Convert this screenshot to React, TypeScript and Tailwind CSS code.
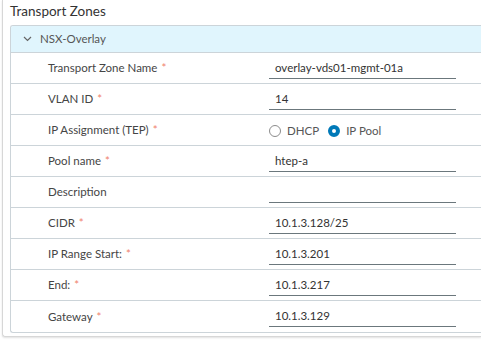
import React from "react";

type Field = {
  label: string;
  required?: boolean;
  value?: string;
  radio?: boolean;
};

const fields: Field[] = [
  { label: "Transport Zone Name", required: true, value: "overlay-vds01-mgmt-01a" },
  { label: "VLAN ID", required: true, value: "14" },
  { label: "IP Assignment (TEP)", required: true, radio: true },
  { label: "Pool name", required: true, value: "htep-a" },
  { label: "Description", value: "" },
  { label: "CIDR", required: true, value: "10.1.3.128/25" },
  { label: "IP Range Start:", required: true, value: "10.1.3.201" },
  { label: "End:", required: true, value: "10.1.3.217" },
  { label: "Gateway", required: true, value: "10.1.3.129" },
];

const Radio = ({ checked, label }: { checked?: boolean; label: string }) => (
  <label className="flex items-center gap-[6px]">
    {checked ? (
      <span className="w-[12px] h-[12px] rounded-full border-[4px] border-[#0079b8] bg-white" />
    ) : (
      <span className="w-[12px] h-[12px] rounded-full border border-[#8c8c8c] bg-white" />
    )}
    <span>{label}</span>
  </label>
);

const FieldRow = ({ field, last }: { field: Field; last: boolean }) => (
  <div
    className={`flex h-[31px] items-center ${
      last ? "" : "border-b border-[#ccd4d9]"
    }`}
  >
    <div className="w-[258px] pl-[37px] text-[#454545]">
      {field.label}
      {field.required && <span className="ml-[4px] text-[#f0826e]">*</span>}
    </div>
    {field.radio ? (
      <div className="flex items-center gap-[9px] pt-[1px] text-[#565656]">
        <Radio label="DHCP" />
        <Radio checked label="IP Pool" />
      </div>
    ) : (
      <div className="w-[187px] h-[31px] flex items-end pb-[5px]">
        <div className="w-full h-[20px] border-b border-[#6b777c] pl-[6px] text-[#333] leading-[18px]">
          {field.value}
        </div>
      </div>
    )}
  </div>
);

export default function App() {
  return (
    <div className="w-[481px] h-[349px] bg-white overflow-hidden font-['Lato',sans-serif] text-[11.5px]">
      <div className="ml-[2px] pl-[7px] pb-[3px] border-l border-b border-[#d7d7d7] rounded-bl-[3px] shadow-[0_1px_2px_rgba(0,0,0,0.12)]">
        <h2 className="h-[25px] pt-[2px] text-[13.5px] leading-[18px] text-[#333]">
          Transport Zones
        </h2>
        <div className="border border-r-0 border-[#ccd4d9] rounded-l-[3px] overflow-hidden">
          <div className="h-[27px] flex items-center gap-[8px] pl-[12px] bg-[#e0f5fd] border-b border-[#ccd4d9] text-[#565656]">
            <svg width="9" height="6" viewBox="0 0 9 6" fill="none">
              <path d="M1 1l3.5 3.5L8 1" stroke="#666" strokeWidth="1.2" />
            </svg>
            <span>NSX-Overlay</span>
          </div>
          {fields.map((f, i) => (
            <FieldRow key={f.label} field={f} last={i === fields.length - 1} />
          ))}
        </div>
      </div>
    </div>
  );
}
